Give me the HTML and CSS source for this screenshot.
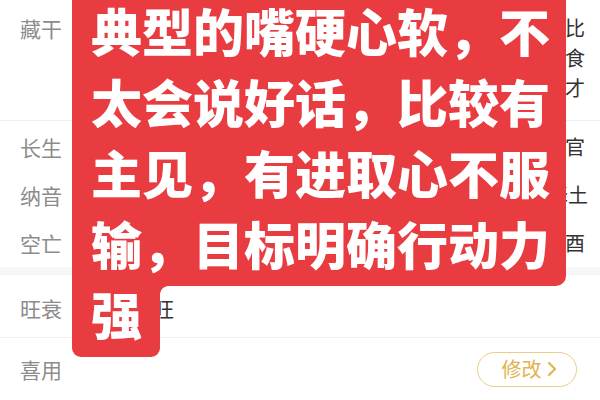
FILE: index.html
```html
<!DOCTYPE html>
<html lang="zh">
<head>
<meta charset="utf-8">
<link rel="stylesheet" href="styles.css">
</head>
<body>
<div class="page">
  <div class="row row-first">
    <div class="label">藏干</div>
    <div class="vals"><span class="cell stack">比食才</span></div>
  </div>
  <div class="group">
    <div class="row row-mid">
      <div class="label">长生</div>
      <div class="vals"><span class="cell">官</span></div>
    </div>
    <div class="row row-mid">
      <div class="label">纳音</div>
      <div class="vals"><span class="cell shift">大驿土</span></div>
    </div>
    <div class="row row-mid">
      <div class="label">空亡</div>
      <div class="vals"><span class="cell">酉</span></div>
    </div>
  </div>
  <div class="band"></div>
  <div class="row row-state">
    <div class="label label-wide">旺衰</div>
    <div class="state">身旺</div>
  </div>
  <div class="row row-use">
    <div class="label">喜用</div>
    <button class="edit">修改<svg class="chev" width="10" height="16" viewBox="0 0 10 16"><polyline points="2,2 8,8 2,14" fill="none" stroke="#e4b552" stroke-width="2.2" stroke-linecap="round" stroke-linejoin="round"/></svg></button>
  </div>

  <div class="overlay">
    <div class="main">典型的嘴硬心软，不<br>太会说好话，比较有<br>主见，有进取心不服<br>输，目标明确行动力</div>
    <div class="tab">强</div>
  </div>
</div>
</body>
</html>
```

FILE: styles.css
```css
html, body {
  margin: 0;
  padding: 0;
  background: #ffffff;
}
body {
  font-family: "Noto Sans CJK SC", "Noto Sans", sans-serif;
  width: 600px;
  height: 400px;
  overflow: hidden;
}
.page {
  position: relative;
  width: 600px;
  height: 400px;
}
.row {
  display: flex;
  padding: 0 15px 0 20px;
}
.label {
  width: 112px;
  flex: none;
  font-size: 21px;
  color: #8c8c8c;
}
.vals {
  flex: 1;
  display: flex;
  justify-content: flex-end;
  font-size: 20px;
  color: #333333;
}
.cell {
  white-space: nowrap;
}
.cell.stack {
  white-space: normal;
  width: 20px;
  word-break: break-all;
}
.cell.shift {
  margin-right: -3px;
}
.row-first {
  height: 107px;
  padding-top: 13px;
  line-height: 30px;
  border-bottom: 1px solid #efefef;
}
.group {
  padding-top: 2px;
}
.row-mid {
  height: 48px;
  line-height: 48px;
}
.band {
  height: 8px;
  background: linear-gradient(#f9f9f9, #f4f4f4);
}
.row-state {
  height: 58px;
  padding-top: 4px;
  line-height: 58px;
  border-bottom: 1px solid #efefef;
}
.state {
  font-size: 21px;
  color: #333333;
}
.row-use {
  height: 62px;
  align-items: center;
  padding-right: 23px;
}
.edit {
  margin-left: auto;
  width: 100px;
  height: 35px;
  box-sizing: border-box;
  border: 1.5px solid #eccd84;
  border-radius: 18px;
  background: #ffffff;
  color: #e2b24e;
  font-family: "Noto Sans CJK SC", sans-serif;
  font-size: 20px;
  display: flex;
  align-items: center;
  justify-content: center;
  gap: 5px;
  padding: 0 0 0 4px;
  line-height: 1;
}
.chev {
  display: block;
}
.overlay {
  position: absolute;
  top: -13px;
  left: 72px;
  color: #ffffff;
  font-size: 51px;
  font-weight: 900;
  line-height: 71px;
  white-space: nowrap;
}
.main {
  width: 459px;
  padding: 7.5px 16px 7.5px 19px;
  background: #e83c40;
  border-radius: 10px 10px 10px 0;
  position: relative;
  z-index: 1;
}
.tab {
  position: relative;
  width: 51px;
  margin-top: -8px;
  padding: 0 18px 8px 19px;
  background: #e83c40;
  border-radius: 0 0 9px 9px;
}
.tab::after {
  content: "";
  position: absolute;
  left: 100%;
  top: 8px;
  width: 8px;
  height: 8px;
  background: radial-gradient(circle at 100% 100%, transparent 7.5px, #e83c40 8px);
}
```
